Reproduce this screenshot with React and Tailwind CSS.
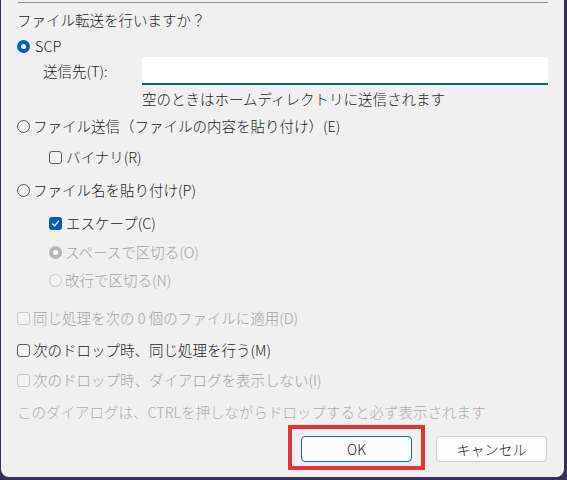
import React from "react";

const font = { fontFamily: '"Noto Sans CJK JP", "Noto Sans", sans-serif' };

function Radio({ checked, disabled }) {
  if (checked && !disabled) {
    return (
      <span className="w-[13px] h-[13px] rounded-full bg-[#005fb8] flex items-center justify-center shrink-0">
        <span className="w-[5px] h-[5px] rounded-full bg-white" />
      </span>
    );
  }
  if (checked && disabled) {
    return (
      <span className="w-[13px] h-[13px] rounded-full bg-[#b5b5b5] flex items-center justify-center shrink-0">
        <span className="w-[5px] h-[5px] rounded-full bg-white" />
      </span>
    );
  }
  return (
    <span
      className={`w-[13px] h-[13px] rounded-full border shrink-0 ${
        disabled ? "border-[#c6c6c6] bg-[#f3f3f3]" : "border-[#5c5c5c] bg-[#f5f5f5]"
      }`}
    />
  );
}

function Check({ checked, disabled }) {
  if (checked) {
    return (
      <span className="w-[13px] h-[13px] rounded-[3px] bg-[#005fb8] flex items-center justify-center shrink-0">
        <svg width="9" height="9" viewBox="0 0 9 9" fill="none">
          <path d="M1.5 4.8 L3.6 6.8 L7.6 2.2" stroke="white" strokeWidth="1.2" strokeLinecap="round" strokeLinejoin="round" />
        </svg>
      </span>
    );
  }
  return (
    <span
      className={`w-[13px] h-[13px] rounded-[3px] border shrink-0 ${
        disabled ? "border-[#c6c6c6] bg-[#f3f3f3]" : "border-[#5c5c5c] bg-[#f5f5f5]"
      }`}
    />
  );
}

function Row({ mt, indent, children, disabled }) {
  return (
    <div
      className={`h-[20px] flex items-center gap-[3px] ${disabled ? "text-[#a2a2a2]" : "text-[#1b1b1b]"}`}
      style={{ marginTop: mt, paddingLeft: indent }}
    >
      {children}
    </div>
  );
}

export default function App() {
  return (
    <div className="w-[567px] h-[480px] bg-[#34305a] overflow-hidden" style={font}>
      <div className="ml-px w-[563px] h-[477px] bg-[#f0f0f0] rounded-b-[8px] text-[14.5px] leading-[20px] font-light flex flex-col">
        {/* group box bottom edge */}
        <div className="mt-[2px] ml-[17px] w-[530px] h-px bg-[#8c8c8c]" />

        <div className="mt-[7px] h-[20px] flex items-center pl-[16px] text-[#1b1b1b]">ファイル転送を行いますか？</div>

        <Row mt={6} indent={16}>
          <Radio checked />
          <span className="ml-[2px]">SCP</span>
        </Row>

        <div className="mt-px h-[28px] flex items-center text-[#1b1b1b]">
          <span className="pl-[42px] w-[141px]">送信先(T):</span>
          <div className="w-[406px] h-[28px] bg-white border-b-2 border-[#0f5a9e] rounded-t-[3px]" />
        </div>

        <div className="mt-[4px] h-[20px] flex items-center pl-[141px] text-[#1b1b1b]">空のときはホームディレクトリに送信されます</div>

        <Row mt={7} indent={16}>
          <Radio />
          <span>ファイル送信（ファイルの内容を貼り付け）(E)</span>
        </Row>

        <Row mt={11} indent={48}>
          <Check />
          <span className="ml-px">バイナリ(R)</span>
        </Row>

        <Row mt={13} indent={16}>
          <Radio />
          <span>ファイル名を貼り付け(P)</span>
        </Row>

        <Row mt={13} indent={48}>
          <Check checked />
          <span className="ml-px">エスケープ(C)</span>
        </Row>

        <Row mt={9} indent={48} disabled>
          <Radio checked disabled />
          <span>スペースで区切る(O)</span>
        </Row>

        <Row mt={8} indent={48} disabled>
          <Radio disabled />
          <span>改行で区切る(N)</span>
        </Row>

        <Row mt={18} indent={16} disabled>
          <Check disabled />
          <span>同じ処理を次の 0 個のファイルに適用(D)</span>
        </Row>

        <Row mt={12} indent={16}>
          <Check />
          <span>次のドロップ時、同じ処理を行う(M)</span>
        </Row>

        <Row mt={10} indent={16} disabled>
          <Check disabled />
          <span>次のドロップ時、ダイアログを表示しない(I)</span>
        </Row>

        <div className="mt-[12px] h-[20px] flex items-center pl-[16px] text-[#acacac]">
          このダイアログは、CTRLを押しながらドロップすると必ず表示されます
        </div>

        <div className="mt-[3px] flex items-start pl-[287px]">
          <div className="w-[137px] h-[45px] border-4 border-[#e3343a]">
            <button className="mt-[7px] ml-[9px] w-[111px] h-[26px] bg-[#fdfdfd] border border-[#0067c0] rounded-[4px] text-[14px] text-[#1b1b1b] flex items-center justify-center">
              OK
            </button>
          </div>
          <button className="mt-[11px] ml-[11px] w-[111px] h-[26px] bg-[#fdfdfd] border border-[#d0d0d0] rounded-[4px] text-[14px] text-[#1b1b1b] flex items-center justify-center">
            キャンセル
          </button>
        </div>
      </div>
    </div>
  );
}
